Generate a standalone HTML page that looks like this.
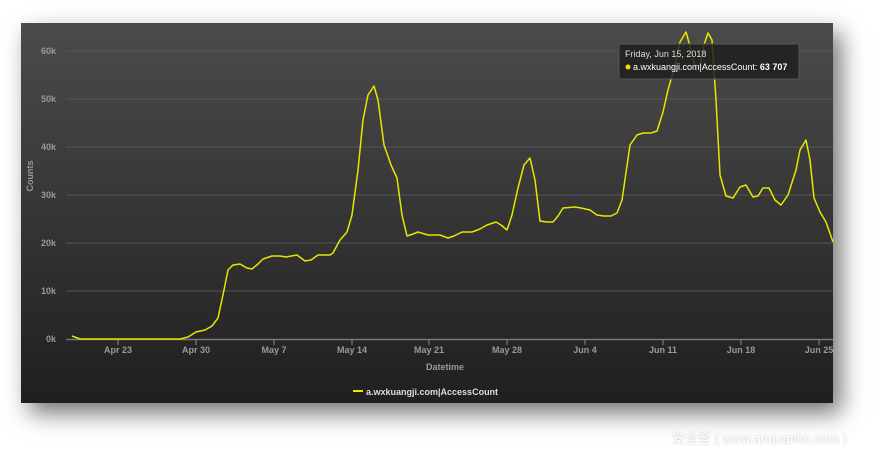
<!DOCTYPE html>
<html><head><meta charset="utf-8"><style>
body{margin:0;width:888px;height:458px;background:#fff;overflow:hidden;position:relative;font-family:"Liberation Sans",sans-serif}
#p{position:absolute;left:21px;top:23px;width:812px;height:380px;background:linear-gradient(#4b4b4b,#3a3a3a 40%,#1f1f1f);box-shadow:8px 10px 22px rgba(0,0,0,.55)}
svg{position:absolute;left:0;top:0}
.wm{position:absolute;left:672px;top:428px;color:#fff;font-size:13px;font-family:"Liberation Sans","Noto Sans CJK SC",sans-serif;text-shadow:0 0 2px #bbb}
</style></head><body>
<div id="p"></div>
<svg width="888" height="458" font-family="Liberation Sans, sans-serif">
<g stroke="#555" stroke-width="1">
<line x1="66" x2="833" y1="51" y2="51"/><line x1="66" x2="833" y1="99" y2="99"/><line x1="66" x2="833" y1="147" y2="147"/><line x1="66" x2="833" y1="195" y2="195"/><line x1="66" x2="833" y1="243" y2="243"/><line x1="66" x2="833" y1="291" y2="291"/>
</g>
<line x1="66" x2="833" y1="339.5" y2="339.5" stroke="#777" stroke-width="1.5"/>
<g stroke="#888"><line x1="118" x2="118" y1="340" y2="345"/><line x1="196" x2="196" y1="340" y2="345"/><line x1="274" x2="274" y1="340" y2="345"/><line x1="352" x2="352" y1="340" y2="345"/><line x1="429" x2="429" y1="340" y2="345"/><line x1="507" x2="507" y1="340" y2="345"/><line x1="585" x2="585" y1="340" y2="345"/><line x1="663" x2="663" y1="340" y2="345"/><line x1="741" x2="741" y1="340" y2="345"/><line x1="819" x2="819" y1="340" y2="345"/></g>
<g fill="#999" font-size="9" font-weight="bold" text-anchor="end"><text x="56" y="54">60k</text><text x="56" y="102">50k</text><text x="56" y="150">40k</text><text x="56" y="198">30k</text><text x="56" y="246">20k</text><text x="56" y="294">10k</text><text x="56" y="342">0k</text></g>
<g fill="#999" font-size="9" font-weight="bold" text-anchor="middle"><text x="118" y="353">Apr 23</text><text x="196" y="353">Apr 30</text><text x="274" y="353">May 7</text><text x="352" y="353">May 14</text><text x="429" y="353">May 21</text><text x="507" y="353">May 28</text><text x="585" y="353">Jun 4</text><text x="663" y="353">Jun 11</text><text x="741" y="353">Jun 18</text><text x="819" y="353">Jun 25</text>
<text x="445" y="370">Datetime</text></g>
<text transform="translate(33,176) rotate(-90)" fill="#999" font-size="9" font-weight="bold" text-anchor="middle">Counts</text>
<line x1="353" x2="363" y1="391" y2="391" stroke="#e8e800" stroke-width="2"/>
<text x="366" y="395" fill="#ddd" font-size="9" font-weight="bold">a.wxkuangji.com|AccessCount</text>
<polyline fill="none" stroke="#e6e600" stroke-width="1.5" stroke-linejoin="round" points="72,336 80,339 100,339 150,339 180,339 188,337 196,332 205,330 212,326 218,318 224,290 228,270 233,265 240,264 247,268 252,269 258,264 263,259 272,256 280,256 286,257 297,255 305,261 311,260 318,255 330,255 333,253 340,240 347,232 352,215 358,170 363,120 368,95 374,86 378,100 384,145 391,165 397,178 402,215 407,236 413,234 418,232 428,235 440,235 448,238 454,236 462,232 472,232 480,229 487,225 496,222 501,225 507,230 512,215 518,188 524,165 530,158 535,180 540,221 547,222 553,222 558,216 563,208 575,207 581,208 590,210 597,215 604,216 611,216 617,213 622,200 630,145 637,135 643,133 651,133 657,131 663,112 668,90 675,65 680,42 686,32 691,50 696,70 700,66 704,45 708,33 712,40 716,100 720,175 726,196 733,198 740,187 746,185 753,197 758,196 763,188 769,188 775,200 781,205 788,195 796,170 800,150 806,140 810,160 814,198 820,212 826,222 833,242"/>
<rect x="619" y="44" width="180" height="35" fill="rgba(30,30,30,.85)" stroke="#555"/>
<text x="625" y="57" fill="#ddd" font-size="9">Friday, Jun 15, 2018</text>
<circle cx="628" cy="67" r="2.5" fill="#e6e600"/>
<text x="633" y="70" fill="#fff" font-size="9">a.wxkuangji.com|AccessCount: <tspan font-weight="bold">63 707</tspan></text>
</svg>
<div class="wm">安全客 ( www.anquanke.com )</div>
</body></html>
